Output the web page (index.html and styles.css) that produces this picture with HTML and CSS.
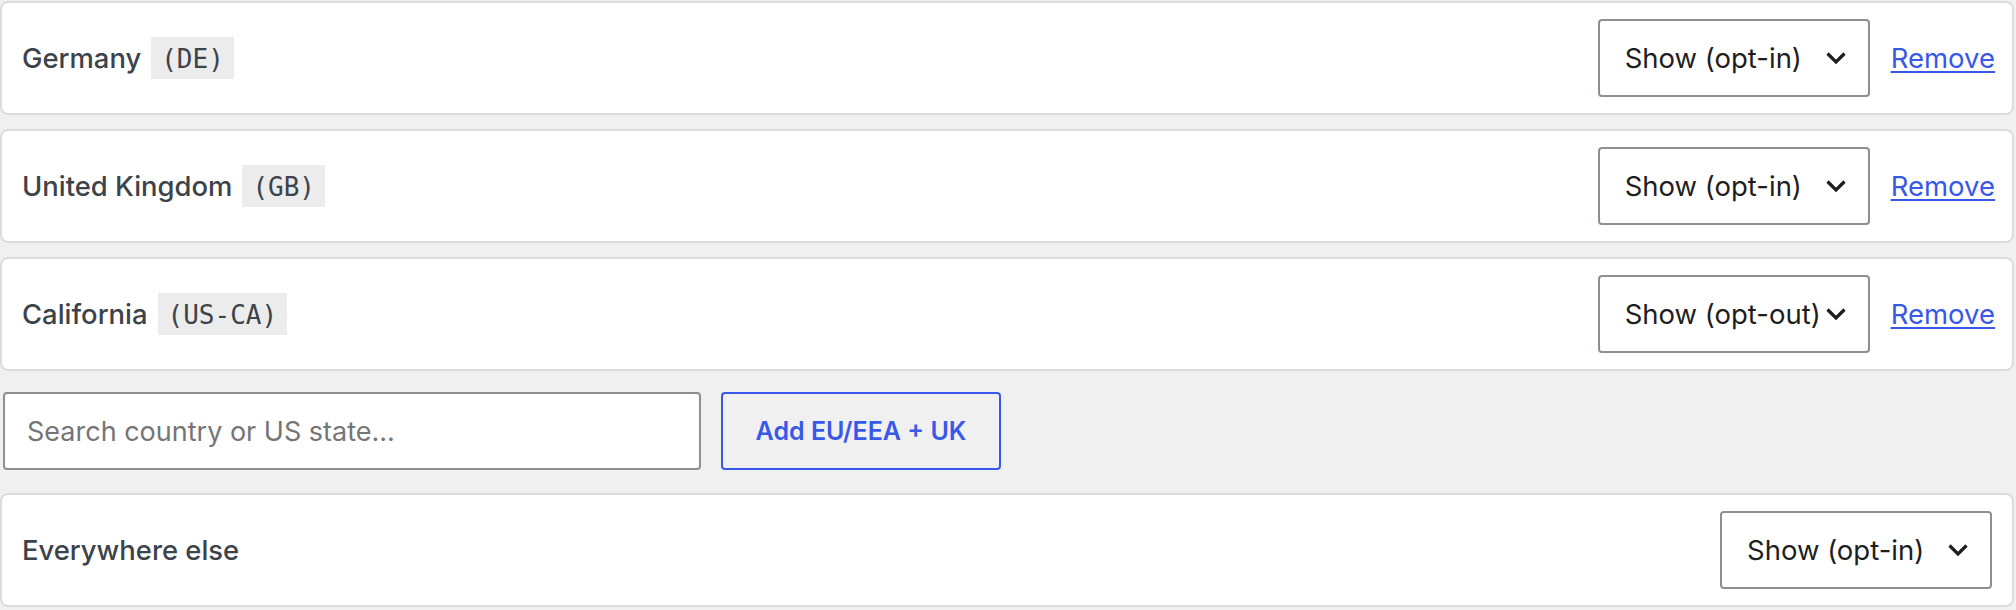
FILE: index.html
```html
<!DOCTYPE html>
<html lang="en">
<head>
<meta charset="utf-8">
<title>Regions</title>
<link rel="stylesheet" href="styles.css">
</head>
<body>
<div class="list">
  <div class="card">
    <div class="name">Germany <code>(DE)</code></div>
    <div class="controls">
      <div class="select"><span>Show (opt-in)</span><svg class="chev" viewBox="0 0 20 12"><polyline points="1.5,1.5 10,10 18.5,1.5"/></svg></div>
      <a class="remove" href="#">Remove</a>
    </div>
  </div>
  <div class="card">
    <div class="name">United Kingdom <code>(GB)</code></div>
    <div class="controls">
      <div class="select"><span>Show (opt-in)</span><svg class="chev" viewBox="0 0 20 12"><polyline points="1.5,1.5 10,10 18.5,1.5"/></svg></div>
      <a class="remove" href="#">Remove</a>
    </div>
  </div>
  <div class="card">
    <div class="name">California <code>(US-CA)</code></div>
    <div class="controls">
      <div class="select"><span>Show (opt-out)</span><svg class="chev" viewBox="0 0 20 12"><polyline points="1.5,1.5 10,10 18.5,1.5"/></svg></div>
      <a class="remove" href="#">Remove</a>
    </div>
  </div>
  <div class="add-row">
    <input class="search" type="text" placeholder="Search country or US state...">
    <button class="add" type="button">Add EU/EEA + UK</button>
  </div>
  <div class="card">
    <div class="name">Everywhere else</div>
    <div class="controls">
      <div class="select"><span>Show (opt-in)</span><svg class="chev" viewBox="0 0 20 12"><polyline points="1.5,1.5 10,10 18.5,1.5"/></svg></div>
    </div>
  </div>
</div>
</body>
</html>
```
FILE: styles.css
```css
html, body {
  margin: 0;
  padding: 0;
  background: #f0f0f1;
  font-family: Inter, "Liberation Sans", sans-serif;
}

.list {
  display: flex;
  flex-direction: column;
  gap: 14px;
  padding: 1px 2px 0 0;
}

.card {
  display: flex;
  align-items: center;
  justify-content: space-between;
  background: #fff;
  border: 2px solid #dcdcde;
  border-radius: 8px;
  padding: 16px 20px;
}

.name {
  font-size: 27.4px;
  font-weight: 500;
  color: #3c434a;
  display: flex;
  align-items: center;
  gap: 10px;
}

.name code {
  font-family: "DejaVu Sans Mono", monospace;
  font-size: 26px;
  font-weight: 400;
  line-height: 32px;
  padding: 6px 10px 4px;
  background: #ececec;
  color: #3c434a;
}

.controls {
  display: flex;
  align-items: center;
  gap: 21px;
}

.select {
  box-sizing: border-box;
  width: 272px;
  height: 78px;
  border: 2px solid #8c8f94;
  border-radius: 4px;
  background: #fff;
  display: flex;
  align-items: center;
  padding: 0 22px 0 25px;
  font-size: 27.5px;
  color: #1e1e1e;
}

.chev {
  margin-left: auto;
  width: 20px;
  height: 12px;
  flex: none;
}

.chev polyline {
  fill: none;
  stroke: #1e1e1e;
  stroke-width: 3.2;
}

.remove {
  font-size: 27.5px;
  color: #3858e9;
  text-decoration: underline;
  text-underline-offset: 3px;
  margin-right: -3px;
}

.add-row {
  display: flex;
  gap: 20px;
  margin: 7px 0 9px 3px;
}

.search {
  box-sizing: border-box;
  width: 698px;
  height: 78px;
  border: 2px solid #8c8f94;
  border-radius: 4px;
  padding: 0 22px;
  font-family: Inter, "Liberation Sans", sans-serif;
  font-size: 27px;
  color: #1e1e1e;
  background: #fff;
}

.search::placeholder {
  color: #757575;
}

.add {
  box-sizing: border-box;
  width: 280px;
  height: 78px;
  border: 2px solid #3858e9;
  border-radius: 4px;
  background: transparent;
  color: #3858e9;
  font-family: Inter, "Liberation Sans", sans-serif;
  font-size: 25px;
  font-weight: 600;
}
```
